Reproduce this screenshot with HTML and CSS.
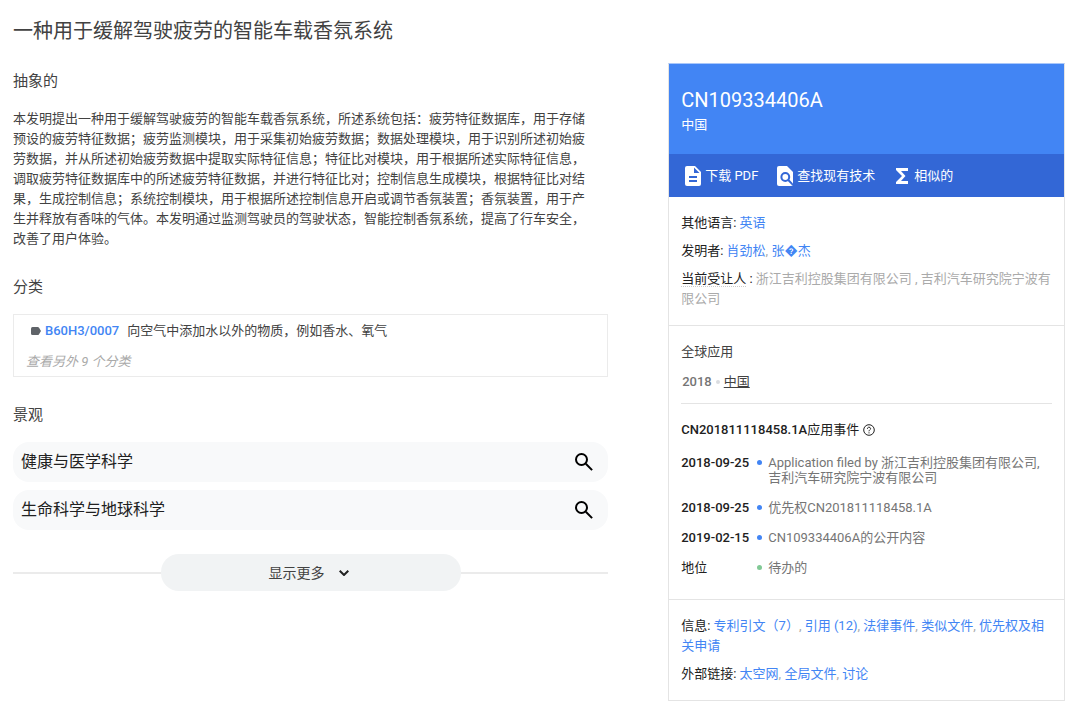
FILE: index.html
```html
<!DOCTYPE html>
<html lang="zh-CN">
<head>
<meta charset="utf-8">
<title>CN109334406A</title>
<link rel="stylesheet" href="styles.css">
</head>
<body>
<main class="page">
  <h1 class="title">一种用于缓解驾驶疲劳的智能车载香氛系统</h1>
  <div class="columns">
    <div class="content">
      <section>
        <h2 class="heading">抽象的</h2>
        <p class="abstract">本发明提出一种用于缓解驾驶疲劳的智能车载香氛系统，所述系统包括：疲劳特征数据库，用于存储预设的疲劳特征数据；疲劳监测模块，用于采集初始疲劳数据；数据处理模块，用于识别所述初始疲劳数据，并从所述初始疲劳数据中提取实际特征信息；特征比对模块，用于根据所述实际特征信息，调取疲劳特征数据库中的所述疲劳特征数据，并进行特征比对；控制信息生成模块，根据特征比对结果，生成控制信息；系统控制模块，用于根据所述控制信息开启或调节香氛装置；香氛装置，用于产生并释放有香味的气体。本发明通过监测驾驶员的驾驶状态，智能控制香氛系统，提高了行车安全，改善了用户体验。</p>
      </section>
      <section class="section">
        <h2 class="heading">分类</h2>
        <div class="classes">
          <div class="class-row">
            <svg class="tag" viewBox="0 0 10 8" aria-hidden="true"><path d="M1.5 0H6.7Q7.4 0 7.9 .6L10 4 7.9 7.4Q7.4 8 6.7 8H1.5Q0 8 0 6.5V1.5Q0 0 1.5 0Z"/></svg>
            <a class="code" href="#B60H3">B60H3/0007</a>
            <span>向空气中添加水以外的物质，例如香水、氧气</span>
          </div>
          <button class="more-classes" type="button">查看另外 9 个分类</button>
        </div>
      </section>
      <section class="section landscapes">
        <h2 class="heading">景观</h2>
        <button class="topic" type="button"><span>健康与医学科学</span>
          <svg class="search" viewBox="0 0 18 18" aria-hidden="true"><circle cx="6.5" cy="6.5" r="5.5"/><path d="M10.8 10.8l6.3 6.3"/></svg></button>
        <button class="topic" type="button"><span>生命科学与地球科学</span>
          <svg class="search" viewBox="0 0 18 18" aria-hidden="true"><circle cx="6.5" cy="6.5" r="5.5"/><path d="M10.8 10.8l6.3 6.3"/></svg></button>
        <div class="expand">
          <button class="show-more" type="button">显示更多
            <svg class="chevron" viewBox="0 0 10 6" aria-hidden="true"><path d="M.7 .7L5 5 9.3 .7"/></svg></button>
        </div>
      </section>
    </div>
    <aside class="card">
      <header class="card-head">
        <h2 class="number">CN109334406A</h2>
        <p class="country">中国</p>
      </header>
      <nav class="actions">
        <a class="action" href="#pdf"><svg class="doc" viewBox="0 0 16 20" aria-hidden="true"><path fill="#fff" d="M2 0H10L16 6V18Q16 20 14 20H2Q0 20 0 18V2Q0 0 2 0Z"/><path fill="#3367d6" d="M9 1.5V7H14.5ZM4 10H12V12H4ZM4 14H12V16H4Z"/></svg>下载 PDF</a>
        <a class="action" href="#prior"><svg class="doc" viewBox="0 0 16 20" aria-hidden="true"><path fill="#fff" d="M2 0H10L16 6V18Q16 20 14 20H2Q0 20 0 18V2Q0 0 2 0Z"/><circle cx="8.3" cy="11" r="3.9" fill="none" stroke="#3367d6" stroke-width="2"/><path d="M11 13.8l5 5" stroke="#3367d6" stroke-width="2"/></svg>查找现有技术</a>
        <a class="action" href="#similar"><svg class="sigma" viewBox="0 0 12 16" aria-hidden="true"><path fill="#fff" d="M0 0H12V3H5L9.5 8 5 13H12V16H0V14L6 8 0 2Z"/></svg>相似的</a>
      </nav>
      <dl class="block facts">
        <div><dt>其他语言:</dt> <dd><a href="#en">英语</a></dd></div>
        <div><dt>发明者:</dt> <dd><a href="#xiao">肖劲松</a>, <a href="#zhang">张&#xFFFD;杰</a></dd></div>
        <div><dt><span class="hint">当前受让人</span> :</dt> <dd>浙江吉利控股集团有限公司 , 吉利汽车研究院宁波有限公司</dd></div>
      </dl>
      <section class="block">
        <h3 class="subhead">全球应用</h3>
        <p class="world"><span>2018</span><i class="dot dot-gray"></i><a class="cn" href="#cn">中国</a></p>
        <h3 class="events-head"><span><b class="app-id">CN201811118458.1A</b>应用事件</span>
          <svg class="help" viewBox="0 0 12 12" aria-hidden="true"><circle cx="6" cy="6" r="5.3"/><path d="M4.4 4.8C4.4 2.6 7.6 2.7 7.6 4.7 7.6 5.8 6 5.9 6 7.3M6 8.3V9.4"/></svg></h3>
        <ul class="events">
          <li><b class="date">2018-09-25</b><i class="dot"></i><span class="event">Application filed by 浙江吉利控股集团有限公司, 吉利汽车研究院宁波有限公司</span></li>
          <li><b class="date">2018-09-25</b><i class="dot"></i><span class="event">优先权CN201811118458.1A</span></li>
          <li><b class="date">2019-02-15</b><i class="dot"></i><span class="event">CN109334406A的公开内容</span></li>
          <li><span class="status">地位</span><i class="dot dot-green"></i><span class="event">待办的</span></li>
        </ul>
      </section>
      <dl class="block facts">
        <div><dt>信息:</dt> <dd><a href="#cites">专利引文（7）</a>, <a href="#cited">引用 (12)</a>, <a href="#legal">法律事件</a>, <a href="#docs">类似文件</a>, <a href="#priority">优先权及相关申请</a></dd></div>
        <div><dt>外部链接:</dt> <dd><a href="#espacenet">太空网</a>, <a href="#dossier">全局文件</a>, <a href="#discuss">讨论</a></dd></div>
      </dl>
    </aside>
  </div>
</main>
</body>
</html>
```
FILE: styles.css
```css
* { box-sizing: border-box; }
body, h1, h2, h3, p, ul, dl, dd { margin: 0; padding: 0; }
body {
  font: 13px/20px Roboto, "Noto Sans CJK SC", sans-serif;
  color: #424242;
  background: #fff;
}
h1, h2, h3 { font-weight: 400; }
a { color: #4285f4; text-decoration: none; }
button { font: inherit; color: inherit; border: 0; padding: 0; background: none; cursor: pointer; }
svg { flex: none; fill: none; }

.page { padding: 16px 15px 12px 13px; }
.title { font-size: 20px; line-height: 30px; }
.columns {
  display: grid;
  grid-template-columns: minmax(0, 3fr) minmax(0, 2fr);
  gap: 60px;
  align-items: start;
  margin-top: 17px;
}

.content { padding-top: 7px; }
.heading { font-size: 15px; line-height: 22px; }
.abstract { margin-top: 17px; padding-right: 16px; }
.section { margin-top: 27px; }
.classes { margin-top: 16px; padding: 6px 12px 4px; border: 1px solid #ebebeb; }
.class-row { display: flex; align-items: center; padding-left: 5px; }
.tag { width: 10px; height: 8px; margin-right: 4px; fill: #5f6368; }
.code { margin-right: 8px; font-weight: 500; }
.more-classes { margin-top: 11px; font-style: italic; color: #aaa; }

.topic {
  display: flex;
  justify-content: space-between;
  align-items: center;
  width: 100%;
  height: 40px;
  margin-top: 8px;
  padding: 0 15px 0 8px;
  border-radius: 16px;
  background: #f8f9fa;
  font-size: 16px;
  color: #212121;
}
.landscapes .heading { margin-bottom: 16px; }
.search { width: 18px; height: 18px; stroke: #000; stroke-width: 2; }
.expand { display: flex; align-items: center; margin-top: 24px; }
.expand::before, .expand::after { content: ""; flex: 1; height: 2px; background: #ebebeb; }
.show-more {
  display: flex;
  justify-content: center;
  align-items: center;
  gap: 14px;
  width: 300px;
  height: 37px;
  padding-right: 4px;
  border-radius: 18px;
  background: #f1f3f4;
  font-size: 14px;
}
.chevron { width: 10px; height: 6px; stroke: #212121; stroke-width: 2; }

.card { border: 1px solid #e4e4e4; border-top-color: #a9c7fa; }
.card-head { padding: 22px 12px 18px; background: #4285f4; color: #fff; }
.number { font-size: 20px; line-height: 28px; }
.country { line-height: 22px; }
.actions { display: flex; height: 43px; padding: 0 16px; gap: 19px; background: #3367d6; }
.action { display: flex; align-items: center; gap: 4px; color: #fff; }
.doc { width: 16px; height: 20px; }
.sigma { width: 12px; height: 16px; margin: 0 2px; }

.block { padding: 16px 12px; }
.block + .block { border-top: 1px solid #e4e4e4; }
.facts { color: #aaa; }
.facts div + div { margin-top: 8px; }
.facts dt, .facts dd { display: inline; }
.facts dt { color: #212121; }
.hint { border-bottom: 1px dotted #ccc; }
.subhead { font-size: 13px; line-height: 20px; }
.world { display: flex; align-items: center; margin-top: 10px; padding: 0 1px 11px; border-bottom: 1px solid #e4e4e4; }
.world span { font-weight: 500; color: #757575; }
.cn { color: #424242; text-decoration: underline; }
.dot { flex: none; width: 5px; height: 5px; border-radius: 50%; background: #4285f4; }
.dot-gray { width: 4px; height: 4px; margin: 0 4px; background: #dadce0; }
.dot-green { background: #81c995; }
.events-head { display: flex; align-items: center; gap: 4px; margin-top: 16px; font-size: 13px; color: #212121; }
.app-id { font-weight: 500; }
.help { width: 12px; height: 12px; stroke: #212121; }
.events { list-style: none; padding-bottom: 8px; }
.events li {
  display: grid;
  grid-template-columns: 76px 5px minmax(0, 1fr);
  margin-top: 15px;
  line-height: 15px;
  color: #757575;
}
.events .dot { margin-top: 5px; }
.event { padding-left: 6px; }
.date { font-weight: 500; color: #212121; }
.status { color: #212121; }
```
